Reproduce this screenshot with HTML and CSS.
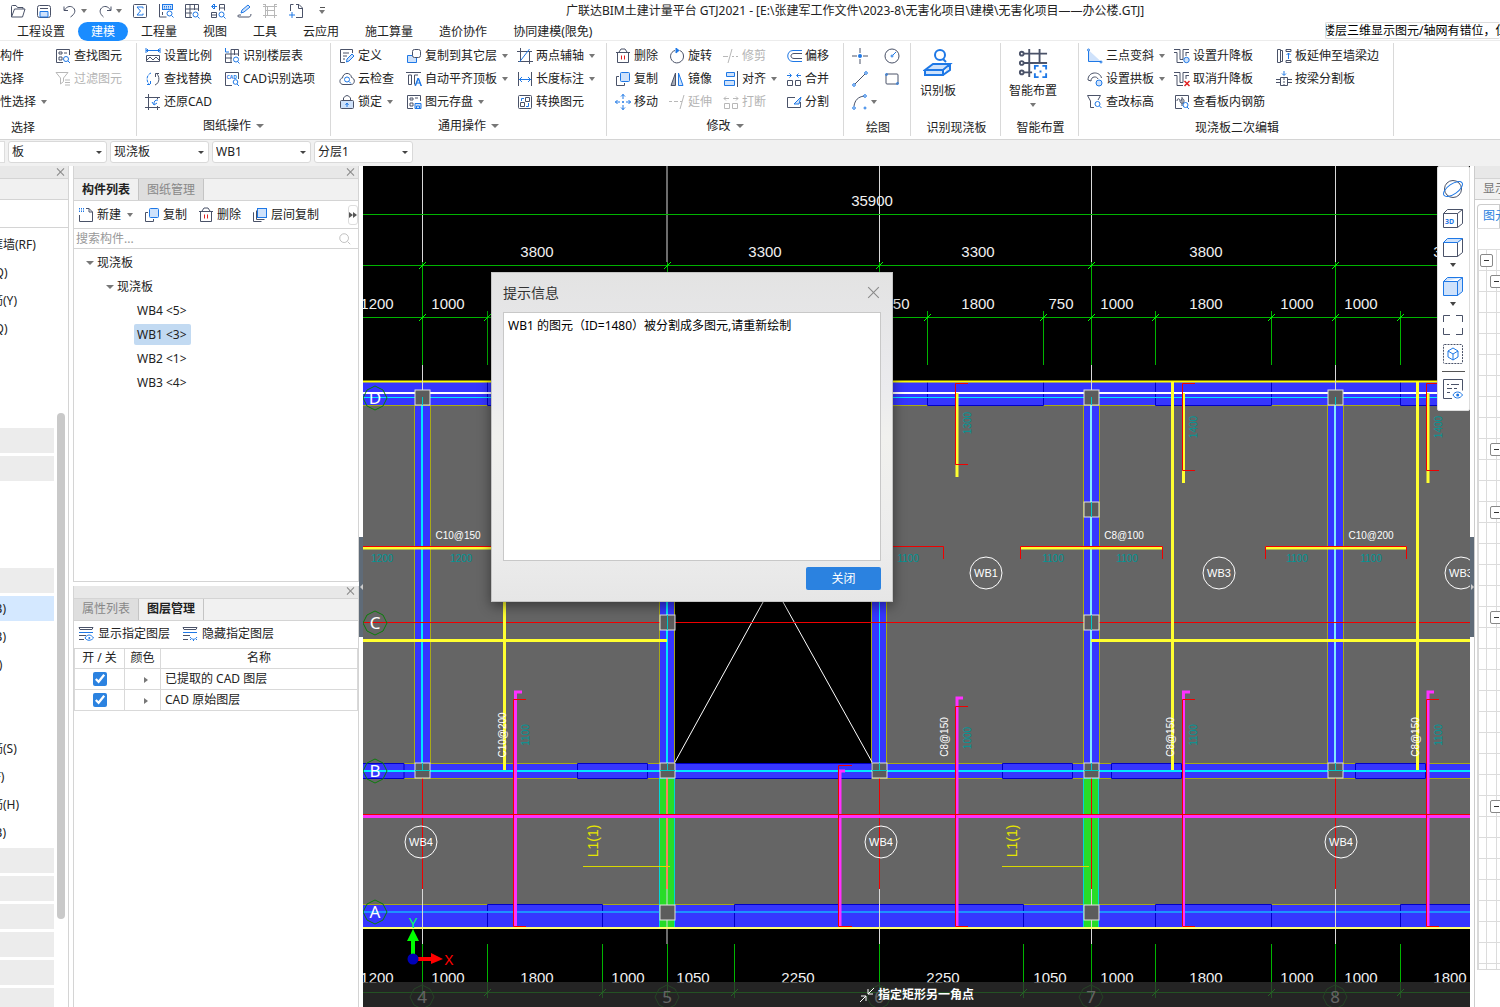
FILE: index.html
```html
<!DOCTYPE html>
<html lang="zh-CN">
<head>
<meta charset="utf-8">
<title>广联达BIM土建计量平台 GTJ2021</title>
<link rel="stylesheet" href="styles.css">
</head>
<body>
<svg class="defs" aria-hidden="true">
  <symbol id="open" viewBox="0 0 16 16"><path class="d" d="M1.500 14V3.500q0-1 1-1H6l1.500 2h5.500V6M1.500 14h11l2.500-8H4.500z"/></symbol>
  <symbol id="save" viewBox="0 0 16 16"><rect class="d" x="1.500" y="2.500" width="13" height="12" rx="2"/><path class="b f" d="M4 14V8.500h8V14z"/><path class="d" d="M4 5.500h8"/></symbol>
  <symbol id="undo" viewBox="0 0 16 16"><path class="d" d="M2 3.500v4h4M2.500 7C5 3 9 2.500 11.500 5s1.500 6-3 9"/></symbol>
  <symbol id="redo" viewBox="0 0 16 16"><path class="d" d="M14 3.500v4h-4M13.500 7C11 3 7 2.500 4.500 5S3 11 6.500 14"/></symbol>
  <symbol id="sum" viewBox="0 0 16 16"><rect class="d" x="1.500" y="1.500" width="13" height="13" rx="1"/><path class="b" d="M11 5.500V4H5l3.500 4L5 12h6v-1.500"/></symbol>
  <symbol id="keyfind" viewBox="0 0 16 16"><rect class="b f" x="4.500" y="1.500" width="10" height="5"/><path class="b" d="M6 3.500h7M6 5h7" stroke-dasharray="1 1"/><path class="d" d="M1.500 1v13h7M4.500 9v3"/><circle class="b" cx="11.500" cy="10.500" r="2.500"/><path class="b" d="m13.500 12.500 2 2"/></symbol>
  <symbol id="gridfind" viewBox="0 0 16 16"><path class="d" d="M8 14.500H1.500v-13h13V8M1.500 6h13M1.500 10H8M6 1.500v13M10.500 1.500V7"/><circle class="b" cx="11.500" cy="11.500" r="2.500"/><path class="b" d="m13.500 13.500 2 2"/></symbol>
  <symbol id="swapfind" viewBox="0 0 16 16"><path class="b" d="M7 3.500H2M4 1 1.500 3.500 4 6M4.500 1v5"/><path class="d" d="M9.500 1.500h5v6M9.500 1.500v6M1.500 9.500h5v5h-5zM1.500 12h5M9.500 5h5"/><circle class="b" cx="11.500" cy="11.500" r="2.500"/><path class="b" d="m13.500 13.500 2 2"/></symbol>
  <symbol id="pen" viewBox="0 0 16 16"><path class="b f" d="m5 10 1-3 6-5 2 2-6 5z"/><path class="d" d="M5 12H2.500q-1.500 1 0 2h11q1.500-1 1.500-3"/></symbol>
  <symbol id="ladder" viewBox="0 0 16 16"><path class="g" d="M3.500 1v14M12.500 1v14M1 3.500h14M3.500 7.500h9M1 12.500h14M5.500 3.500v9M1 1.500h2M13 1.500h2"/></symbol>
  <symbol id="pageadd" viewBox="0 0 16 16"><path class="d" d="M2.500 8V1.500h3M8 1.500h3L14.500 5v9.500H8M10.500 1.500V5.500h4"/><path class="b" d="M4 9v6M1 12h6"/></symbol>
  <symbol id="listfind" viewBox="0 0 16 16"><path class="d" d="M8 14.500H1.500v-13h13V7M4 4h3v2H4zM4 9h3v3H4zM9 5h3"/><circle class="b" cx="11" cy="11" r="2.500"/><path class="b" d="m13 13 2 2"/></symbol>
  <symbol id="filter" viewBox="0 0 16 16"><path class="g" d="M1 1.500h12L8.500 7v3.500L5.500 13V7zM10 9h5M10 11.500h5M10 14h5"/></symbol>
  <symbol id="scale" viewBox="0 0 16 16"><path class="b" d="M1 0v5M15 0v5M1 2.500h14M3 1 1.500 2.500 3 4M13 1l1.500 1.500L13 4"/><path class="d" d="M1.500 7.500h13v6h-13zM2 12l3-3 3 3 3-3 3 3"/></symbol>
  <symbol id="floorfind" viewBox="0 0 16 16"><path class="b" d="M1.500 0v4H5"/><path class="d" d="M7 1.500h7.500V8M7 1.500V14M10.500 1.500V7M1.500 6v8.500H8M1.500 6h13M1.500 10H8"/><circle class="b" cx="12" cy="11.500" r="2.500"/><path class="b" d="m13.500 13.500 2 2"/></symbol>
  <symbol id="cycle" viewBox="0 0 16 16"><path class="b" d="M6 2C1 4 1 11 5 14M2 13.500h3.500V10" stroke-dasharray="3 1"/><path class="d" d="M10 14c5-2 5-9 1-12M14 2.500h-3.500V6"/></symbol>
  <symbol id="cad" viewBox="0 0 16 16"><path class="d" d="M8 14.500H1.500v-13h13V8"/><text class="tiny" x="2.500" y="7.500">CAD</text><circle class="b" cx="11.500" cy="11" r="2.300"/><path class="b" d="m13 13 2 2"/></symbol>
  <symbol id="restore" viewBox="0 0 16 16"><path class="d" d="M3.500 0v16M0 3.500h15M12.500 3v2M0 13.500h15M12.500 12v4"/><path class="b" d="M13 6c-3 0-4 1-4 4M7 8l2 3 3-2"/></symbol>
  <symbol id="define" viewBox="0 0 16 16"><path class="d" d="M6 14.500H1.500v-13h12V5M4 5h6M4 8h4M4 11h2"/><path class="b f" d="m7.500 14 .5-3 5-5 2 2-5 5z"/></symbol>
  <symbol id="copyfloor" viewBox="0 0 16 16"><path class="b f" d="M1.500 7.500h9v7h-9z"/><rect class="d w" x="6.500" y="1.500" width="8" height="8" rx="2"/></symbol>
  <symbol id="cloud" viewBox="0 0 16 16"><path class="d" d="M4 13.500C-.5 13 .5 7 3.500 7 4 1 12 1 12.500 6.500c4 1 3.500 6.500 0 7z"/><circle class="b" cx="8" cy="8.500" r="2.500"/><path class="b" d="m10 10.500 2 2"/></symbol>
  <symbol id="aligntop" viewBox="0 0 16 16"><path class="d" d="M0 1.500h15M2.500 4v9.500h3V4zM12 4H8.500v9.500"/><path class="b" d="m9 15 3-8 3 8M10 12h4M9.500 15l3-8 3 8"/></symbol>
  <symbol id="lock" viewBox="0 0 16 16"><rect class="d f" x="1.500" y="6.500" width="13" height="8" rx="1"/><path class="d" d="M4.500 6V4q3.500-5 7 0v2"/><path class="b" d="M8 9v4M6.500 11 8 9l1.500 2"/></symbol>
  <symbol id="store" viewBox="0 0 16 16"><path class="d" d="M7 14.500H1.500v-13h13V7M4 4h3v2H4zM4 9h3v3H4zM9 4h3"/><path class="b f" d="M9 9.500h6v5H9zM10.500 14v-2h3v2"/></symbol>
  <symbol id="axis" viewBox="0 0 16 16"><path class="d" d="M3.500 0v14M0 3.500h15M12.500 3v13M1 13.500h15"/><path class="b" d="m2.500 14 10-13"/></symbol>
  <symbol id="dimension" viewBox="0 0 16 16"><path class="d" d="M1.500 1v14M14.500 1v14"/><path class="b" d="M2 8.500h12M5 6 2.500 8.500 5 11M11 6l2.500 2.500L11 11"/></symbol>
  <symbol id="convert" viewBox="0 0 16 16"><rect class="d" x="1.500" y="1.500" width="13" height="13" rx="1"/><path class="d" d="M8.500 3.500h4v4h-4zM3.500 8.500h4v4h-4z"/><path class="b" d="M7 4.500H4.500V7M9 12.500h2.500V9"/></symbol>
  <symbol id="delete" viewBox="0 0 16 16"><path class="d" d="M1 4.500h14M4 4l2-3h4l2 3M2.500 5v9.500h11V5"/><path class="r" d="M6.500 7.500v4M9.500 7.500v4"/></symbol>
  <symbol id="copy" viewBox="0 0 16 16"><path class="d" d="M4 5.500H1.500v9h8V12"/><rect class="b f" x="5.500" y="1.500" width="9" height="9" rx="1"/></symbol>
  <symbol id="copies" viewBox="0 0 16 16"><path class="d" d="M2 5.500h-.5v9h8M4.500 3.500v9h8"/><rect class="b f" x="5.500" y="1.500" width="9" height="9"/></symbol>
  <symbol id="move" viewBox="0 0 16 16"><path class="b" d="M8 0v5M6 2.500 8 .5l2 2M8 16v-5M6 13.500l2 2 2-2M0 8h5M2.500 6l-2 2 2 2M16 8h-5M13.500 6l2 2-2 2M7 8h2M8 7v2"/></symbol>
  <symbol id="rotate" viewBox="0 0 16 16"><path class="d" d="M6 2.500C1 4 0 10 4 13.500s11 0 10.500-5.500c0-3-2-5-4-5.500"/><path class="b bf" d="M7 0v5l3-2.500z"/></symbol>
  <symbol id="mirror" viewBox="0 0 16 16"><path class="d gf" d="M6.500 2v12.500H2z"/><path class="b f" d="M9.500 2v12.500H14z"/></symbol>
  <symbol id="trim" viewBox="0 0 16 16"><path class="g" d="M0 8.500h5M9 8.500h2M13 8.500h2M9 1 5 15"/></symbol>
  <symbol id="extend" viewBox="0 0 16 16"><path class="g" d="M0 7.500h3M5 7.500h4M11 7.500h2M15 1l-4 14"/></symbol>
  <symbol id="align" viewBox="0 0 16 16"><path class="b f" d="M3.500 1.500h8v4h-8zM1.500 9.500h10v5h-10z"/><path class="d" d="M14.500 0v16"/></symbol>
  <symbol id="break" viewBox="0 0 16 16"><path class="g" d="M1.500 9.500h5v5h-5zM9.500 9.500h5v5h-5zM1 4.500h5M3 2.500l-2 2 2 2M15 4.500h-5M13 2.500l2 2-2 2"/></symbol>
  <symbol id="offset" viewBox="0 0 16 16"><path class="b" d="M16 2.500H7c-7 0-7 11 0 11h9"/><path class="d" d="M16 5.500H8c-4 0-4 5 0 5h8"/></symbol>
  <symbol id="merge" viewBox="0 0 16 16"><path class="d" d="M1.500 9.500h5v5h-5zM9.500 9.500h5v5h-5z"/><path class="b" d="M1 4.500h4M3.500 2.500l2 2-2 2M15 4.500h-4M12.500 2.500l-2 2 2 2"/></symbol>
  <symbol id="split" viewBox="0 0 16 16"><path class="d" d="M9 3.500H1.500v10h13V8"/><path class="b f" d="m8 10 7-7-2 7z"/></symbol>
  <symbol id="point" viewBox="0 0 16 16"><path class="d" d="M8 0v5M8 16v-5M0 8h5M16 8h-5"/><circle class="bf" cx="8" cy="8" r="2"/></symbol>
  <symbol id="circle" viewBox="0 0 16 16"><circle class="d" cx="8" cy="8" r="7"/><circle class="b" cx="8" cy="8" r="1"/><path class="b" d="m9 7 3-3"/></symbol>
  <symbol id="line" viewBox="0 0 16 16"><path class="d" d="M3 13 13 3"/><circle class="b" cx="2" cy="14" r="1.300"/><circle class="b" cx="14" cy="2" r="1.300"/></symbol>
  <symbol id="rect" viewBox="0 0 16 16"><rect class="d" x="2" y="3" width="12" height="10" rx="1"/><circle class="b" cx="2.500" cy="3.500" r="1"/><circle class="b" cx="13.500" cy="12.500" r="1"/></symbol>
  <symbol id="arc" viewBox="0 0 16 16"><path class="d" d="M2 12C3 6 6 3 12 2"/><circle class="b" cx="2" cy="14" r="1.300"/><circle class="b" cx="13" cy="2" r="1.300"/><circle class="b" cx="13" cy="14" r="1"/></symbol>
  <symbol id="slab" viewBox="0 0 30 30"><g stroke-width="2"><circle class="b" cx="17" cy="7" r="5"/><path class="b" d="m20 11 3 3"/><path class="b f" d="m2 22 8-6h17l-7 6zM2 22v5h18v-5M20 27l7-5v-6"/></g></symbol>
  <symbol id="smart" viewBox="0 0 32 32"><g stroke-width="2"><path class="d" d="M5 6h26M5 16h26M5 26h10M12 1v30M23 1v15"/><circle class="d w" cx="4" cy="6" r="2"/><circle class="d w" cx="4" cy="16" r="2"/><circle class="d w" cx="4" cy="26" r="2"/><path class="w" d="M16 17h16v15H16z"/><path class="b" d="M18 23v-4h4M26 19h4v4M30 27v4h-4M22 31h-4v-4M24 24v2"/></g></symbol>
  <symbol id="slope" viewBox="0 0 16 16"><path class="f" d="M1.500 2v12h13z"/><path class="b" d="M1.500 3v10.500H14"/><circle class="b" cx="1.500" cy="2" r="1"/><circle class="b" cx="14" cy="14" r="1"/></symbol>
  <symbol id="arch" viewBox="0 0 16 16"><path class="d" d="M1 9C1 0 13 0 14.500 7M4 10c0-5 6-5 7-2M1 9l3 1"/><circle class="b f" cx="12" cy="12" r="3"/></symbol>
  <symbol id="level" viewBox="0 0 16 16"><path class="d" d="M7 13.500H3.500V7L.5 1.500h13L11 6"/><circle class="b" cx="10.500" cy="10" r="2.500"/><path class="b" d="m12.500 12 2 2"/></symbol>
  <symbol id="drop" viewBox="0 0 16 16"><path class="d" d="M0 1.500h6v10h3v-10h6M0 4.500h3v10h6M12 4.500h3M12 4v4"/><circle class="b f" cx="12.500" cy="12" r="2.700"/></symbol>
  <symbol id="undrop" viewBox="0 0 16 16"><path class="d" d="M0 1.500h6v10h3v-10h6M0 4.500h3v10h6M12 4.500h3M12 4v4"/><path class="r" stroke-width="1.500" d="m10.500 10 5 5M15.500 10l-5 5"/></symbol>
  <symbol id="rebar" viewBox="0 0 16 16"><path class="d" d="M8 14.500H1.500v-13h13V8M3 7c0-3 3-3 3 0s4 3 4 0-3-3-3 0M8 3v9"/><circle class="b" cx="11.500" cy="11" r="2.500"/><path class="b" d="m13 13 2 2"/></symbol>
  <symbol id="towall" viewBox="0 0 16 16"><path class="d" d="M1.500 1.500h3v13h-3zM4.500 2.500h2v11h-2zM10 1.500h5v2h-5zM10 12.500h5v2h-5z"/><path class="b" d="M12.500 5v6M10.500 7l2-2 2 2"/></symbol>
  <symbol id="bybeam" viewBox="0 0 16 16"><path class="b" d="M8 0v4M6 2.500l2 2 2-2"/><path class="d" d="M4.500 6.500h7v8h-7zM0 8.500h4M0 11.500h4M12 8.500h4M12 11.500h4"/><path class="d" stroke-dasharray="2 1" d="M8 7v9"/></symbol>
  <symbol id="new" viewBox="0 0 16 16"><path class="d" d="M1.500 8v6.500h13V5L11 1.500H8M11 1.500V5h3.500"/><path class="b" stroke-dasharray="1 1" d="M1 1.500h5M1 3h5M1 4.500h5"/></symbol>
  <symbol id="search" viewBox="0 0 16 16"><circle class="g" cx="7" cy="7" r="5"/><path class="g" d="m11 11 3 3"/></symbol>
  <symbol id="layershow" viewBox="0 0 16 16"><path class="d" d="M1 1.500h14l-1 2H2zM1 9.500h7M1 13.500h5"/><path class="b" d="M1 6.500h14M7 12c2-4 6-4 8.500 0-2.500 3-6.500 3-8.500 0"/><circle class="bf" cx="11.300" cy="12" r="1"/></symbol>
  <symbol id="layerhide" viewBox="0 0 16 16"><path class="d" d="M1 1.500h14l-1 2H2zM1 9.500h7M1 13.500h5"/><path class="b" d="M1 6.500h14M8 11c2 3 5 3 7 0M9 13l-1 1M11.500 13.500V15M14 13l1 1"/></symbol>
  <symbol id="orbit" viewBox="0 0 20 20"><circle class="d" cx="10" cy="10" r="8.500"/><ellipse class="b" cx="10" cy="10" rx="11" ry="5" transform="rotate(-35 10 10)"/></symbol>
  <symbol id="cube3d" viewBox="0 0 20 20"><path class="d" d="M.5 5.500h14v14H.5zM.5 5.500l4-4h15v14l-5 4M14.500 5.500l5-4"/><text class="tiny big" x="2" y="16">3D</text></symbol>
  <symbol id="cubetop" viewBox="0 0 20 20"><path class="d" d="M.5 5.500h14v14H.5zM19.500 1.500v14l-5 4"/><path class="b f" d="m.5 5.500 4-4h15l-5 4z"/></symbol>
  <symbol id="cubefull" viewBox="0 0 20 20"><path class="b f" d="M.5 5.500h14v14H.5zM.5 5.500l4-4h15v14l-5 4v-14l5-4"/></symbol>
  <symbol id="frame" viewBox="0 0 20 20"><path class="d" d="M.5 7V.5H7M13 .5h6.500V7M19.500 13v6.500H13M7 19.500H.5V13"/></symbol>
  <symbol id="iso" viewBox="0 0 20 20"><rect class="d" stroke-dasharray="2 1" x=".5" y=".5" width="19" height="19" rx="1"/><path class="b" d="m10 4 5 3v6l-5 3-5-3V7zM5 7l5 3 5-3M10 10v6"/></symbol>
  <symbol id="viewlist" viewBox="0 0 20 20"><path class="d" d="M9 19.500H.5V.5h19v11M4 5.500h2M8 5.500h8M4 9.500h5M11 9.500h3M4 13.500h3"/><path class="b" d="M10 16c2-4 7-4 9.500 0-2.500 4-7.500 4-9.500 0"/><circle class="bf" cx="14.700" cy="16" r="1.500"/></symbol>
</svg>

<header>
  <div class="titlebar">
    <div class="quick">
      <button aria-label="打开"><svg><use href="#open"/></svg></button>
      <button aria-label="保存"><svg><use href="#save"/></svg></button>
      <button aria-label="撤销"><svg><use href="#undo"/></svg><i class="arrow"></i></button>
      <button aria-label="恢复"><svg><use href="#redo"/></svg><i class="arrow"></i></button>
      <button aria-label="汇总"><svg><use href="#sum"/></svg></button>
      <button aria-label="查看工程量"><svg><use href="#keyfind"/></svg></button>
      <button aria-label="查看报表"><svg><use href="#gridfind"/></svg></button>
      <button aria-label="查找替换"><svg><use href="#swapfind"/></svg></button>
      <button aria-label="编辑"><svg><use href="#pen"/></svg></button>
      <button aria-label="楼层" disabled><svg><use href="#ladder"/></svg></button>
      <button aria-label="添加"><svg><use href="#pageadd"/></svg></button>
      <button class="more" aria-label="更多"><i class="arrow"></i></button>
    </div>
    <h1>广联达BIM土建计量平台 GTJ2021 - [E:\张建军工作文件\2023-8\无害化项目\建模\无害化项目——办公楼.GTJ]</h1>
  </div>
  <div class="menubar">
    <nav>
      <a href="#">工程设置</a><a href="#" class="current">建模</a><a href="#">工程量</a><a href="#">视图</a><a href="#">工具</a><a href="#">云应用</a><a href="#">施工算量</a><a href="#">造价协作</a><a href="#">协同建模(限免)</a>
    </nav>
    <div class="ticker"><span>楼层三维显示图元/轴网有错位，但</span></div>
  </div>
</header>

<div class="ribbon">
  <section class="group g-select">
    <div class="tools">
      <button>构件</button><button>选择</button><button>性选择<i class="arrow"></i></button>
      <button><svg><use href="#listfind"/></svg>查找图元</button><button disabled><svg><use href="#filter"/></svg>过滤图元</button>
    </div>
    <h2 class="plain">选择</h2>
  </section>
  <section class="group g-sheet">
    <div class="tools">
      <button><svg><use href="#scale"/></svg>设置比例</button><button><svg><use href="#cycle"/></svg>查找替换</button><button><svg><use href="#restore"/></svg>还原CAD</button>
      <button><svg><use href="#floorfind"/></svg>识别楼层表</button><button><svg><use href="#cad"/></svg>CAD识别选项</button>
    </div>
    <h2>图纸操作<i class="arrow"></i></h2>
  </section>
  <section class="group g-common">
    <div class="tools">
      <button><svg><use href="#define"/></svg>定义</button><button><svg><use href="#cloud"/></svg>云检查</button><button><svg><use href="#lock"/></svg>锁定<i class="arrow"></i></button>
      <button><svg><use href="#copyfloor"/></svg>复制到其它层<i class="arrow"></i></button><button><svg><use href="#aligntop"/></svg>自动平齐顶板<i class="arrow"></i></button><button><svg><use href="#store"/></svg>图元存盘<i class="arrow"></i></button>
      <button><svg><use href="#axis"/></svg>两点辅轴<i class="arrow"></i></button><button><svg><use href="#dimension"/></svg>长度标注<i class="arrow"></i></button><button><svg><use href="#convert"/></svg>转换图元</button>
    </div>
    <h2>通用操作<i class="arrow"></i></h2>
  </section>
  <section class="group g-modify">
    <div class="tools">
      <button><svg><use href="#delete"/></svg>删除</button><button><svg><use href="#copy"/></svg>复制</button><button><svg><use href="#move"/></svg>移动</button>
      <button><svg><use href="#rotate"/></svg>旋转</button><button><svg><use href="#mirror"/></svg>镜像</button><button disabled><svg><use href="#extend"/></svg>延伸</button>
      <button disabled><svg><use href="#trim"/></svg>修剪</button><button><svg><use href="#align"/></svg>对齐<i class="arrow"></i></button><button disabled><svg><use href="#break"/></svg>打断</button>
      <button><svg><use href="#offset"/></svg>偏移</button><button><svg><use href="#merge"/></svg>合并</button><button><svg><use href="#split"/></svg>分割</button>
    </div>
    <h2>修改<i class="arrow"></i></h2>
  </section>
  <section class="group g-draw">
    <div class="tools">
      <button aria-label="点"><svg><use href="#point"/></svg></button><button aria-label="直线"><svg><use href="#line"/></svg></button><button aria-label="弧"><svg><use href="#arc"/></svg><i class="arrow tight"></i></button>
      <button aria-label="圆"><svg><use href="#circle"/></svg></button><button aria-label="矩形"><svg><use href="#rect"/></svg></button>
    </div>
    <h2 class="plain">绘图</h2>
  </section>
  <section class="group g-detect">
    <div class="large"><button><svg><use href="#slab"/></svg>识别板</button></div>
    <h2 class="plain">识别现浇板</h2>
  </section>
  <section class="group g-smart">
    <div class="large"><button><svg><use href="#smart"/></svg>智能布置<i class="arrow"></i></button></div>
    <h2 class="plain">智能布置</h2>
  </section>
  <section class="group g-edit">
    <div class="tools">
      <button><svg><use href="#slope"/></svg>三点变斜<i class="arrow"></i></button><button><svg><use href="#arch"/></svg>设置拱板<i class="arrow"></i></button><button><svg><use href="#level"/></svg>查改标高</button>
      <button><svg><use href="#drop"/></svg>设置升降板</button><button><svg><use href="#undrop"/></svg>取消升降板</button><button><svg><use href="#rebar"/></svg>查看板内钢筋</button>
      <button><svg><use href="#towall"/></svg>板延伸至墙梁边</button><button><svg><use href="#bybeam"/></svg>按梁分割板</button>
    </div>
    <h2 class="plain">现浇板二次编辑</h2>
  </section>
</div>

<div class="filters">
  <span class="stub"></span>
  <label class="combo"><select aria-label="构件大类"><option>板</option></select></label>
  <label class="combo"><select aria-label="构件类型"><option>现浇板</option></select></label>
  <label class="combo"><select aria-label="构件"><option>WB1</option></select></label>
  <label class="combo"><select aria-label="分层"><option>分层1</option></select></label>
</div>

<main>
  <aside class="modules">
    <div class="panel-head"><button class="close" aria-label="关闭导航"></button></div>
    <div class="module-bar"></div>
    <div class="module-gap"></div>
    <div class="module-body">
      <ul>
        <li>人防门框墙(RF)</li><li>砌体墙(Q)</li><li>砌体加筋(Y)</li><li>保温墙(Q)</li><li></li><li></li><li></li>
        <li class="section"></li><li class="section"></li><li></li><li></li><li></li><li class="section"></li>
        <li class="selected">现浇板(B)</li><li>螺旋板(B)</li><li>板洞口(I)</li><li></li><li></li>
        <li>板受力筋(S)</li><li>板负筋(F)</li><li>板洞加筋(H)</li><li>楼板带(B)</li>
        <li class="section"></li><li class="section"></li><li class="section"></li><li class="section"></li><li class="section"></li><li class="section"></li>
      </ul>
      <div class="scrollbar"><span></span></div>
    </div>
  </aside>

  <div class="panels">
    <section class="panel components">
      <div class="panel-head"><button class="close" aria-label="关闭构件列表"></button></div>
      <div class="tabs"><button class="active">构件列表</button><button>图纸管理</button></div>
      <div class="actions">
        <button><svg><use href="#new"/></svg>新建<i class="arrow"></i></button>
        <button><svg><use href="#copy"/></svg>复制</button>
        <button><svg><use href="#delete"/></svg>删除</button>
        <button><svg><use href="#copies"/></svg>层间复制</button>
        <button class="overflow" aria-label="更多"><i></i><i></i></button>
      </div>
      <label class="search"><input type="text" placeholder="搜索构件..." aria-label="搜索构件"><svg><use href="#search"/></svg></label>
      <ul class="tree">
        <li><span><i class="arrow"></i>现浇板</span>
          <ul><li><span><i class="arrow"></i>现浇板</span>
            <ul class="leaves"><li><span>WB4 &lt;5&gt;</span></li><li><span class="picked">WB1 &lt;3&gt;</span></li><li><span>WB2 &lt;1&gt;</span></li><li><span>WB3 &lt;4&gt;</span></li></ul>
          </li></ul>
        </li>
      </ul>
    </section>
    <section class="panel layers">
      <div class="panel-head"><button class="close" aria-label="关闭图层管理"></button></div>
      <div class="tabs"><button>属性列表</button><button class="active">图层管理</button></div>
      <div class="actions">
        <button><svg><use href="#layershow"/></svg>显示指定图层</button>
        <button><svg><use href="#layerhide"/></svg>隐藏指定图层</button>
      </div>
      <table>
        <thead><tr><th class="c-on">开 / 关</th><th class="c-color">颜色</th><th>名称</th></tr></thead>
        <tbody>
          <tr><td><input type="checkbox" checked aria-label="已提取的 CAD 图层"></td><td><i class="expand"></i></td><td class="name">已提取的 CAD 图层</td></tr>
          <tr><td><input type="checkbox" checked aria-label="CAD 原始图层"></td><td><i class="expand"></i></td><td class="name">CAD 原始图层</td></tr>
        </tbody>
      </table>
    </section>
  </div>

  <div class="splitter"><button aria-label="收起左侧"><i class="left"></i></button></div>

  <div class="canvas">
    <svg class="drawing" viewBox="363 166 1107 841" preserveAspectRatio="xMinYMin slice">
      <rect x="363" y="166" width="1107" height="841"/>
      <rect class="slab" x="363" y="381" width="1107" height="547"/>
      <!-- beams -->
      <g class="beam">
        <rect x="363" y="381" width="1107" height="24"/>
        <rect x="415" y="405" width="15" height="358"/><rect x="660" y="405" width="14" height="358"/><rect x="872" y="405" width="14" height="358"/><rect x="1084" y="405" width="15" height="358"/><rect x="1328" y="405" width="15" height="358"/>
        <rect x="363" y="763" width="1107" height="15"/><rect x="363" y="904" width="1107" height="24"/>
      </g>
      <path class="olive" d="M363 405.500H1470M363 763.500H1470M363 778.500H1470M363 904.500H1470M414.500 405V763M430.500 405V763M659.500 405V763M674.500 405V763M871.500 405V763M886.500 405V763M1083.500 405V763M1099.500 405V763M1327.500 405V763M1343.500 405V763"/>
      <path class="window" d="M487.500 382V405.500h115V382M927.500 382V405.500h116V382M1155.500 382V405.500h116V382M1400.500 382V405.500H1470M363 763.500h41v15h-41M577.500 763.500h70v15h-70zM674.500 763.500h197v15h-197zM1002.500 763.500h70v15h-70zM1111.500 763.500h70v15h-70zM1355.500 763.500h70v15h-70zM487.500 927V904.500h115V927M734.500 927V904.500h289V927M1155.500 927V904.500h116V927M1400.500 927V904.500H1470"/>
      <rect x="675" y="580" width="196" height="183"/>
      <path class="white" d="M675 762 773 584l99 178"/>
      <g class="green-beam"><rect x="659.500" y="778.500" width="15" height="149"/><rect x="1083.500" y="778.500" width="15" height="149"/></g>
      <!-- axis lines -->
      <path class="yellow" d="M363 381.500H1470"/>
      <path class="white w2" d="M363 393H1470"/>
      <path class="cyan" d="M363 397.500H1470"/>
      <path class="cyan w2" d="M363 771H1470M422 397V770M667 397V770"/>
      <path class="cyan" d="M879.500 397V770"/>
      <path class="paleaxis" d="M1091 397V770M1335 397V770"/>
      <path class="azure" d="M363 912H1470"/>
      <path class="pale" d="M422.500 166V262M667 166V262M879.500 166V262M1091.500 166V262M1335.500 166V262M422.500 365V391M1091.500 365V391M1335.500 365V391M422.500 889V944M667 889V944M879.500 889V944M1091.500 889V944M1335.500 889V944"/>
      <path class="red" d="M363 622.500H1470M422.500 778V889M879.500 778V889M1091.500 778V889M1335.500 778V889"/>
      <path class="pink" d="M667 778V889"/>
      <!-- dimension chains -->
      <path class="green" d="M363 214.500H1470M363 265.500H1470M363 317.500H1470M422.500 262V365M667.500 262V365M879.500 262V365M1091.500 262V365M1335.500 262V365M487.500 311V365M927.500 311V365M1043.500 311V365M1155.500 311V365M1271.500 311V365M1400.500 311V365M363 992.500H1470M422.500 944V998M487.500 944V998M602.500 944V998M667.500 944V998M734.500 944V998M879.500 944V998M1023.500 944V998M1091.500 944V998M1155.500 944V998M1271.500 944V998M1335.500 944V998M1400.500 944V998"/>
      <path class="tick" d="m419 269 7-7M664 269l7-7M876 269l7-7M1088 269l7-7M1332 269l7-7M419 321l7-7M484 321l7-7M924 321l7-7M1040 321l7-7M1088 321l7-7M1152 321l7-7M1268 321l7-7M1332 321l7-7M1397 321l7-7M484 996l7-7M599 996l7-7M731 996l7-7M1020 996l7-7M1152 996l7-7M1268 996l7-7M1397 996l7-7"/>
      <!-- rebar -->
      <path class="bar" d="M363 640.500H667M1091 640.500H1470M504.500 600V770M1172.500 382V770M1417.500 382V770M957 393V477M1183.500 393V483M1428 393V483M363 548H491M1020 548H1163M1265 548H1407"/>
      <path class="magenta" d="M363 816.500H1470M522 692H515.500V927M845 771H840V927M963 698H957V927M1190 692H1183.500V927M1434 692H1428V927"/>
      <path class="red" d="M968 383.500H955.500V464.500H968M1195 383.500H1182.500V470.500H1195M1439 383.500H1426.500V470.500H1439M363 546.500H491M893 546.500H943.500V559M1020.500 559V546.500H1162.500V559M1265.500 559V546.500H1406.500V559M363 814.500H1470M526 699.500H513.500V926.500H526M852 765.500H838.500V926.500H852M968 706.500H955.500V926.500H968M1195 699.500H1182.500V926.500H1195M1439 699.500H1426.500V926.500H1439"/>
      <path class="lemon" d="M363 928H1470"/>
      <path class="lead" d="M583 866.500H670M1002 866.500H1089"/>
      <g class="column">
        <rect x="415" y="390" width="15" height="15"/><rect x="1084" y="390" width="15" height="15"/><rect x="1328" y="390" width="15" height="15"/>
        <rect x="1084" y="502" width="15" height="15"/><rect x="660" y="615" width="15" height="15"/><rect x="1084" y="615" width="15" height="15"/>
        <rect x="415" y="763" width="15" height="15"/><rect x="660" y="763" width="15" height="15"/><rect x="872" y="763" width="15" height="15"/><rect x="1084" y="763" width="15" height="15"/><rect x="1328" y="763" width="15" height="15"/>
        <rect x="660" y="905" width="15" height="15"/><rect x="1084" y="905" width="15" height="15"/>
      </g>
      <path class="teal" d="M422.500 397v8M1091.500 397v8M1335.500 397v8M1091.500 502v15M667.500 615v15M1091.500 615v15M415 770.500h15M422.500 763v7M660 770.500h15M667.500 763v7M872 770.500h15M879.500 763v7M1084 770.500h15M1091.500 763v7M1328 770.500h15M1335.500 763v7"/>
      <!-- dimension text -->
      <g class="dim">
        <text x="872" y="206">35900</text>
        <text x="537" y="257">3800</text><text x="765" y="257">3300</text><text x="978" y="257">3300</text><text x="1206" y="257">3800</text><text x="1450" y="257">3800</text>
        <text x="377" y="309">1200</text><text x="448" y="309">1000</text><text x="897" y="309">750</text><text x="978" y="309">1800</text><text x="1061" y="309">750</text><text x="1117" y="309">1000</text><text x="1206" y="309">1800</text><text x="1297" y="309">1000</text><text x="1361" y="309">1000</text>
        <text x="377" y="983">1200</text><text x="448" y="983">1000</text><text x="537" y="983">1800</text><text x="628" y="983">1000</text><text x="693" y="983">1050</text><text x="798" y="983">2250</text><text x="943" y="983">2250</text><text x="1050" y="983">1050</text><text x="1117" y="983">1000</text><text x="1206" y="983">1800</text><text x="1297" y="983">1000</text><text x="1361" y="983">1000</text><text x="1450" y="983">1800</text>
      </g>
      <g class="note">
        <text x="458" y="539">C10@150</text><text x="1124" y="539">C8@100</text><text x="1371" y="539">C10@200</text>
        <text transform="translate(506 735) rotate(-90)">C10@200</text><text transform="translate(948 737) rotate(-90)">C8@150</text><text transform="translate(1174 737) rotate(-90)">C8@150</text><text transform="translate(1419 737) rotate(-90)">C8@150</text>
      </g>
      <g class="length">
        <text x="382" y="562">1200</text><text x="461" y="562">1200</text><text x="908" y="562">1100</text><text x="1053" y="562">1100</text><text x="1127" y="562">1100</text><text x="1297" y="562">1100</text><text x="1371" y="562">1100</text>
        <text transform="translate(971 423) rotate(-90)">1300</text><text transform="translate(1197 427) rotate(-90)">1400</text><text transform="translate(1442 427) rotate(-90)">1400</text>
        <text transform="translate(529 735) rotate(-90)">1100</text><text transform="translate(971 738) rotate(-90)">1000</text><text transform="translate(1197 735) rotate(-90)">1100</text><text transform="translate(1442 735) rotate(-90)">1100</text>
      </g>
      <g class="mark">
        <circle cx="986" cy="573" r="16"/><circle cx="1219" cy="573" r="16"/><circle cx="1461" cy="573" r="16"/><circle cx="421" cy="842" r="16"/><circle cx="881" cy="842" r="16"/><circle cx="1341" cy="842" r="16"/>
        <text x="986" y="577">WB1</text><text x="1219" y="577">WB3</text><text x="1461" y="577">WB3</text><text x="421" y="846">WB4</text><text x="881" y="846">WB4</text><text x="1341" y="846">WB4</text>
      </g>
      <g class="beamname"><text transform="translate(598 841) rotate(-90)">L1(1)</text><text transform="translate(1017 841) rotate(-90)">L1(1)</text></g>
      <g class="axisname">
        <path d="m375 386 8 4 4 8-4 8-8 4-8-4-4-8 4-8zM375 611l8 4 4 8-4 8-8 4-8-4-4-8 4-8zM375 759l8 4 4 8-4 8-8 4-8-4-4-8 4-8zM375 900l8 4 4 8-4 8-8 4-8-4-4-8 4-8zM422 985l8 4 4 8-4 8-8 4-8-4-4-8 4-8zM667 985l8 4 4 8-4 8-8 4-8-4-4-8 4-8zM879 985l8 4 4 8-4 8-8 4-8-4-4-8 4-8zM1091 985l8 4 4 8-4 8-8 4-8-4-4-8 4-8zM1335 985l8 4 4 8-4 8-8 4-8-4-4-8 4-8z"/>
        <text x="375" y="404">D</text><text x="375" y="629">C</text><text x="375" y="777">B</text><text x="375" y="918">A</text>
        <text x="422" y="1003">4</text><text x="667" y="1003">5</text><text x="879" y="1003">6</text><text x="1091" y="1003">7</text><text x="1335" y="1003">8</text>
      </g>
      <!-- coordinate axes -->
      <path fill="#0f0" d="M411 955V941H407L413 929l6 12H415V955z"/><path fill="#f00" d="M418 957h13v-4l12 6-12 5v-3H418z"/><circle fill="#0000b8" cx="413" cy="959" r="5.500"/>
      <g class="ucs"><text x="413" y="928" fill="#0f6">Y</text><text x="449" y="965" fill="#f00">X</text></g>
    </svg>

    <div class="hint"><svg viewBox="0 0 16 16"><path d="M15 1 9 7M9 2v5h5M1 15l6-6M2 9h5v5"/></svg>指定矩形另一角点</div>

    <div class="viewbar">
      <button aria-label="动态观察"><svg><use href="#orbit"/></svg></button>
      <button aria-label="三维"><svg><use href="#cube3d"/></svg></button>
      <button class="drop" aria-label="俯视"><svg><use href="#cubetop"/></svg><i class="arrow"></i></button>
      <button class="drop" aria-label="实体"><svg><use href="#cubefull"/></svg><i class="arrow"></i></button>
      <button aria-label="全屏"><svg><use href="#frame"/></svg></button>
      <button aria-label="局部三维"><svg><use href="#iso"/></svg></button>
      <hr>
      <button aria-label="显示设置"><svg><use href="#viewlist"/></svg></button>
    </div>

    <div class="dialog" role="dialog" aria-labelledby="dialog-title">
      <div class="dialog-head"><h2 id="dialog-title">提示信息</h2><button class="close" aria-label="关闭对话框"></button></div>
      <div class="message">WB1 的图元（ID=1480）被分割成多图元,请重新绘制</div>
      <button class="primary">关闭</button>
    </div>
  </div>

  <div class="splitter"><button aria-label="收起右侧"><i class="right"></i></button></div>

  <aside class="display">
    <div class="panel-head"></div>
    <div class="display-title">显示设置</div>
    <div class="display-tab"><a href="#">图元显示</a></div>
    <div class="display-head"></div>
    <div class="display-tree">
      <button class="root" style="grid-row:1" aria-label="所有构件"></button>
      <button style="grid-row:2" aria-label="轴线"></button>
      <button style="grid-row:10" aria-label="柱"></button>
      <button style="grid-row:13" aria-label="墙"></button>
      <button style="grid-row:18" aria-label="门窗洞"></button>
      <button style="grid-row:27" aria-label="梁"></button>
    </div>
  </aside>
</main>
</body>
</html>
```

FILE: styles.css
```css
* { box-sizing: border-box; }
body { margin: 0; height: 100vh; display: flex; flex-direction: column; overflow: hidden; background: #fff; color: #222; font: 12px/16px "Noto Sans", "Noto Sans CJK SC", sans-serif; }
button { border: 0; background: none; padding: 0; margin: 0; color: inherit; font: inherit; display: flex; align-items: center; white-space: nowrap; }
button:disabled { color: #b4b4b4; }
h1, h2, ul { margin: 0; padding: 0; font: inherit; list-style: none; }
a { color: inherit; text-decoration: none; }
svg { display: block; flex: none; width: 16px; height: 16px; }
.defs { position: absolute; width: 0; height: 0; }

/* icon strokes */
.d { fill: none; stroke: #4a5268; }
.b { fill: none; stroke: #1e78e6; }
.g { fill: none; stroke: #b8b8b8; }
.r { fill: none; stroke: #e02020; }
.f { fill: #cfe2fb; }
.w { fill: #fff; }
.gf { fill: #a8adb8; }
.bf { fill: #1e78e6; }
.tiny { font: bold 5px "Noto Sans", sans-serif; fill: #1e78e6; }
.tiny.big { font-size: 7px; }

.arrow { flex: none; width: 0; height: 0; margin-left: 5px; border: 3px solid transparent; border-top: 4px solid #777; border-bottom: 0; }

/* title and menus */
.titlebar { display: grid; grid-template-columns: 566px 1fr; height: 20px; align-items: center; padding-top: 1px; }
.quick { display: flex; gap: 10px; padding-left: 10px; }
.quick .arrow { margin-left: 3px; }
.quick .more { flex-direction: column; justify-content: center; gap: 2px; padding-left: 2px; }
.quick .more::before { content: ""; width: 5px; height: 1px; margin-left: 3px; background: #555; }
h1 { white-space: nowrap; overflow: hidden; }
.menubar { display: flex; justify-content: space-between; height: 21px; border-bottom: 1px solid #ececec; }
nav { display: flex; padding: 2px 0 0 4px; }
nav a { padding: 2px 13px 1px; height: 19px; border-radius: 10px; }
nav .current { background: #1a8cff; color: #fff; }
.ticker { width: 175px; height: 17px; margin-top: 2px; border: 1px solid #ddd; border-right: 0; border-radius: 2px; overflow: hidden; white-space: nowrap; color: #000; }
.ticker span { margin-left: -3px; }

/* ribbon */
.ribbon { display: flex; padding: 2px 0 3px; border-bottom: 1px solid #d4d4d4; }
.group { flex: none; padding-left: 8px; border-right: 1px solid #d9d9d9; }
.tools { display: grid; grid-template-rows: repeat(3, 23px); grid-auto-flow: column; justify-content: start; padding-top: 1px; }
.tools button { gap: 3px; }
.tools .arrow { margin-left: 2px; }
.tools .tight { margin-left: 0; }
.group h2 { display: flex; justify-content: center; align-items: center; height: 23px; padding: 3px 8px 0 0; }
.group .plain { padding: 6px 6px 0 0; }
.group h2 .arrow { border-width: 4px 4px 0; }
.large { height: 70px; padding-top: 5px; }
.large button { flex-direction: column; }
.large svg { width: 30px; height: 30px; margin-bottom: 5px; }
.large .arrow { margin: 4px 0 0; }
.g-select { width: 137px; padding-left: 0; }
.g-select .tools { grid-template-columns: 55px auto; }
.g-select .plain { padding-right: 90px; }
.g-sheet { width: 194px; }
.g-sheet .tools { grid-template-columns: 79px auto; }
.g-common { width: 276px; }
.g-common .tools { grid-template-columns: 67px 111px auto; }
.g-modify { width: 237px; }
.g-modify .tools { grid-template-columns: 54px 54px 63px auto; }
.g-draw { width: 67px; }
.g-draw .tools { grid-template-columns: 32px auto; }
.g-detect { width: 90px; }
.g-detect button { width: 38px; }
.g-smart { width: 78px; }
.g-smart button { width: 48px; }
.g-edit { width: 315px; }
.g-edit .tools { grid-template-columns: 87px 102px auto; }

.filters { display: flex; gap: 3px; padding: 1px 0 3px; background: #f1f1f1; }
.stub { width: 5px; background: #fff; border: 1px solid #ddd; border-left: 0; }
.combo { position: relative; width: 99px; }
.combo select { appearance: none; display: block; width: 100%; height: 22px; padding: 0 3px; border: 1px solid #d9d9d9; border-radius: 3px; background: #fff; color: inherit; font: inherit; }
.combo::after { content: ""; position: absolute; right: 5px; top: 10px; border: 3px solid transparent; border-top: 3px solid #444; border-bottom: 0; }

/* work area */
main { flex: 1; min-height: 0; display: flex; }
.panel-head { flex: none; height: 13px; display: flex; justify-content: flex-end; align-items: center; padding-right: 3px; background: #e8e8e8; border-bottom: 1px solid #d4d4d4; }
.close { position: relative; width: 9px; height: 9px; }
.close::before, .close::after { content: ""; position: absolute; left: 4px; top: -1px; height: 10px; width: 1px; background: #888; rotate: 45deg; }
.close::after { rotate: -45deg; }

.modules { flex: none; width: 69px; display: flex; flex-direction: column; border-right: 1px solid #d4d4d4; overflow: hidden; }
.module-bar { flex: none; height: 21px; background: #f1f1f1; border-bottom: 1px solid #d4d4d4; }
.module-gap { flex: none; height: 28px; border-bottom: 1px solid #d4d4d4; }
.module-body { flex: 1; min-height: 0; display: flex; }
.module-body ul { flex: none; width: 54px; padding-top: 4px; display: flex; flex-direction: column; gap: 3px; overflow: hidden; }
.module-body li { flex: none; height: 25px; line-height: 25px; text-indent: -45px; white-space: nowrap; }
.module-body .section { background: #ececec; }
.module-body .selected { background: #d4e8ff; }
.scrollbar { padding: 185px 0 0 3px; }
.scrollbar span { display: block; width: 8px; height: 506px; border-radius: 4px; background: #c9c9c9; }

.panels { flex: none; width: 290px; padding-left: 4px; display: flex; flex-direction: column; gap: 4px; }
.panel { border: 1px solid #d4d4d4; border-top: 0; display: flex; flex-direction: column; }
.components { flex: 415 0 0; }
.layers { flex: 422 0 0; border-bottom: 0; }
.tabs { flex: none; display: flex; height: 22px; background: #f1f1f1; border-bottom: 1px solid #d4d4d4; }
.tabs button { width: 65px; justify-content: center; background: #dedede; color: #888; border-right: 1px solid #c4c4c4; }
.tabs .active { background: #f0f0f0; color: #222; font-weight: bold; }
.actions { flex: none; display: flex; height: 28px; padding-left: 4px; border-bottom: 1px solid #d4d4d4; gap: 11px; }
.actions button { gap: 3px; }
.actions .arrow { margin-left: 3px; }
.layers .actions { gap: 12px; }
.layers .actions button { gap: 4px; }
.actions .overflow { gap: 0; margin-left: auto; height: 20px; align-self: center; border: 1px solid #ddd; border-radius: 3px; }
.overflow i, .expand { border: 3px solid transparent; border-left: 4px solid #555; border-right: 0; }
.search { flex: none; display: flex; align-items: center; height: 20px; padding-right: 4px; border-bottom: 1px solid #d4d4d4; }
.search input { flex: 1; min-width: 0; border: 0; padding: 0 2px; font: inherit; outline: 0; }
.search ::placeholder { color: #999; }
.search svg { width: 14px; height: 14px; margin-right: 2px; }
.tree { padding: 2px 0 0 9px; }
.tree span { display: inline-flex; align-items: center; gap: 3px; height: 21px; margin: 1px 0 2px; padding: 0 4px 0 3px; border-radius: 2px; }
.tree li { line-height: 20px; }
.tree li > span { vertical-align: top; }
.tree .arrow { margin: 0; border-width: 4px 4px 0; }
.tree ul { padding-left: 20px; }
.tree ul.leaves { padding-left: 31px; }
.tree .picked { background: #c2daf2; }

table { width: 100%; table-layout: fixed; border-collapse: collapse; }
th, td { height: 21px; padding: 0; border: 1px solid #d9d9d9; font-weight: normal; text-align: center; vertical-align: middle; }
thead th { height: 20px; border-top: 0; }
.c-on { width: 50px; }
.c-color { width: 36px; }
td.name { padding-left: 4px; text-align: left; }
td input { display: block; width: 14px; height: 14px; margin: 0 auto; accent-color: #2b82e0; }
.expand { display: inline-block; border-left-color: #777; margin-left: 6px; }

.splitter { flex: none; width: 4px; display: flex; align-items: center; background: #fff; }
.splitter button { width: 4px; height: 100px; background: #5f6b78; justify-content: center; }
.splitter i { border: 3px solid transparent; }
.splitter .left { border-right-color: #ccc; border-left: 0; }
.splitter .right { border-left-color: #ccc; border-right: 0; }

/* drawing */
.canvas { position: relative; flex: 1; min-width: 0; overflow: hidden; background: #000; }
.drawing { position: absolute; inset: 0; width: 100%; height: 100%; }
.drawing path:not([fill]) { fill: none; }
.slab { fill: #656565; }
.beam { fill: #3636ff; }
.olive { stroke: #a8a818; }
.window { stroke: #0000c8; }
.green-beam rect { fill: #28dc28; stroke: #00d8d8; }
.white { stroke: #fff; }
.w2 { stroke-width: 2; }
.yellow { stroke: #ff0; stroke-width: 2; }
.lemon { stroke: #ffff70; stroke-width: 2; }
.cyan { stroke: #00e8ff; }
.paleaxis { stroke: #80e8ff; stroke-width: 2; }
.azure { stroke: #1e90ff; stroke-width: 2; }
.pale { stroke: #d8d8d8; }
.red { stroke: #f00000; }
.pink { stroke: #ff8060; stroke-width: 2; }
.green { stroke: #00b400; }
.tick { stroke: #0f0; }
.bar { stroke: #ffff30; stroke-width: 3; }
.magenta { stroke: #ff30ff; stroke-width: 3; }
.lead { stroke: #d8d800; }
.column rect { fill: #5c5c5c; stroke: #e0e0e0; }
.teal { stroke: #00c8c8; }
.drawing text { text-anchor: middle; font-family: "Liberation Sans", sans-serif; }
.drawing .dim text { font-size: 15px; fill: #f0f0f0; }
.drawing .note text { font-size: 10px; fill: #fff; }
.drawing .length text { font-size: 10px; fill: #009696; }
.mark circle { fill: none; stroke: #fff; }
.drawing .mark text { font-size: 11px; fill: #fff; }
.drawing .beamname text { font-size: 14px; fill: #e6e600; }
.axisname path { stroke: #0a7d0a; }
.drawing .axisname text { font: 17px "Noto Sans", sans-serif; fill: #fff; }
.drawing .ucs text { font: 15px "Noto Sans", sans-serif; }

.hint { position: absolute; left: 0; right: 0; bottom: 0; height: 25px; display: flex; align-items: center; justify-content: center; gap: 3px; background: rgba(48, 48, 48, .75); color: #fff; font-weight: bold; }
.hint svg { fill: none; stroke: #fff; }

.viewbar { position: absolute; top: 0; right: 0; width: 33px; height: 245px; padding: 12px 1px 0 0; display: flex; flex-direction: column; align-items: center; gap: 9px; background: #fff; border: 1px solid #ddd; border-radius: 2px; }
.viewbar svg { width: 20px; height: 20px; }
.viewbar .drop { flex-direction: column; gap: 6px; }
.viewbar .arrow { margin: 0; border-top-color: #444; }
.viewbar hr { width: 23px; margin: -2px 0; border: 0; border-top: 1px solid #555; }

.dialog { position: absolute; left: 128px; top: 106px; width: 402px; height: 330px; padding: 0 11px 11px; display: flex; flex-direction: column; background: linear-gradient(#e3e3e3, #ebebee 35%, #f1f1ee 50%, #ececec 85%, #e6e6e6); border: 1px solid #c4c4c4; box-shadow: 0 4px 12px rgba(0, 0, 0, .45); }
.dialog-head { height: 39px; display: flex; justify-content: space-between; align-items: center; }
.dialog-head h2 { font-size: 14px; color: #333; }
.dialog-head .close { width: 14px; height: 14px; }
.dialog-head .close::before, .dialog-head .close::after { height: 15px; left: 6px; }
.message { flex: 1; padding: 5px 4px; background: #fff; border: 1px solid #c8c8c8; color: #000; }
.primary { width: 75px; height: 23px; margin-top: 6px; align-self: flex-end; justify-content: center; background: #2b82e0; color: #fff; border-radius: 2px; }

/* display settings */
.display { flex: none; width: 26px; display: flex; flex-direction: column; overflow: hidden; white-space: nowrap; border-left: 1px solid #ccc; }
.display-title { flex: none; height: 21px; padding: 2px 0 0 8px; background: #f1f1f1; border-bottom: 1px solid #ccc; color: #777; }
.display-tab { flex: none; height: 28px; padding: 4px 0 0 2px; }
.display-tab a { display: block; height: 24px; padding: 3px 5px; border: 1px solid #ccc; border-bottom: 0; border-radius: 4px 0 0; color: #2b82e0; }
.display-head { flex: none; height: 22px; margin-left: 2px; border: 1px solid #ddd; border-right: 0; }
.display-tree { flex: none; display: grid; grid-template-rows: repeat(34, 21px); margin-left: 2px; padding-bottom: 5px; border-left: 2px solid #d9d9d9; border-bottom: 1px solid #d9d9d9; align-items: center; background: repeating-linear-gradient(transparent 0 20px, #dcdcdc 20px 21px), linear-gradient(90deg, transparent 7px, #dcdcdc 7px 8px, transparent 8px 17px, #dcdcdc 17px 18px, transparent 18px); }
.display-tree button { width: 13px; height: 13px; margin-left: 11px; justify-content: center; background: #fff; border: 1px solid #888; border-radius: 2px; }
.display-tree button::before { content: ""; width: 5px; height: 1px; background: #333; }
.display-tree .root { margin-left: 1px; }
```
